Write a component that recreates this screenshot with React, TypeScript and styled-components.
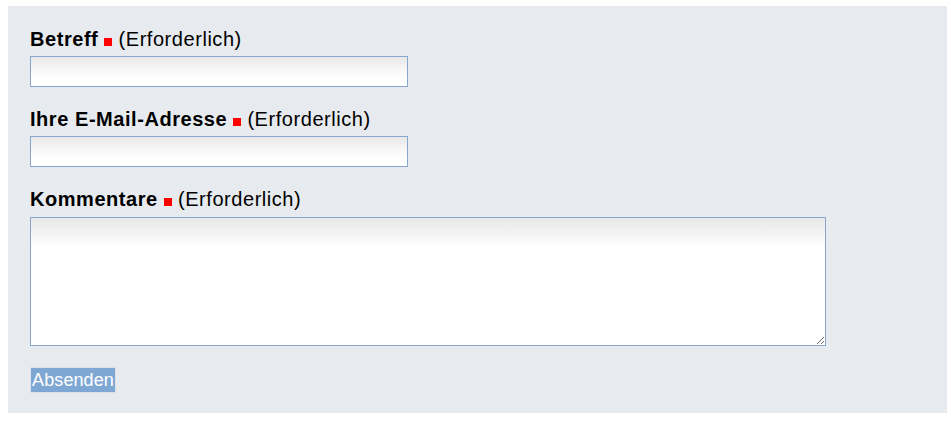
import React from 'react';
import styled, { createGlobalStyle } from 'styled-components';

const GlobalStyle = createGlobalStyle`
  body {
    margin: 0;
    background: #fff;
    font-family: 'Liberation Sans', Arial, sans-serif;
  }
`;

const fields = [
  { id: 'subject', label: 'Betreff' },
  { id: 'email', label: 'Ihre E-Mail-Adresse' },
];

function App(): JSX.Element {
  return (
    <>
      <GlobalStyle />
      <StyledPanel onSubmit={(e) => e.preventDefault()}>
        {fields.map((f) => (
          <StyledField key={f.id}>
            <StyledLabel htmlFor={f.id}>
              <b>{f.label}</b> <StyledMark /> (Erforderlich)
            </StyledLabel>
            <StyledInput id={f.id} type="text" />
          </StyledField>
        ))}
        <StyledField>
          <StyledLabel htmlFor="comments" gap={7}>
            <b>Kommentare</b> <StyledMark /> (Erforderlich)
          </StyledLabel>
          <StyledTextArea id="comments" />
        </StyledField>
        <StyledButton type="submit">Absenden</StyledButton>
      </StyledPanel>
    </>
  );
}

export default App;

const StyledPanel = styled.form`
  display: flex;
  flex-direction: column;
  align-items: flex-start;
  width: 939px;
  box-sizing: border-box;
  margin: 6px 0 0 8px;
  padding: 22px 22px 20px;
  background-color: #e7ebef;
`;

const StyledField = styled.div`
  display: flex;
  flex-direction: column;
  align-items: flex-start;
  margin-bottom: 21px;
`;

const StyledLabel = styled.label<{ gap?: number }>`
  display: block;
  height: 22px;
  font-size: 20px;
  line-height: 22px;
  letter-spacing: 0.55px;
  color: #000;
  margin-bottom: ${(p) => p.gap ?? 6}px;
  white-space: nowrap;

  b {
    font-weight: 700;
  }
`;

const StyledMark = styled.span`
  display: inline-block;
  width: 8px;
  height: 8px;
  background-color: #f00;
  vertical-align: baseline;
`;

const StyledInput = styled.input`
  width: 378px;
  height: 31px;
  box-sizing: border-box;
  margin: 0;
  padding: 2px 4px;
  border: 1px solid #86a5cf;
  border-radius: 0;
  background: linear-gradient(to bottom, #e8e8e8 0, #ffffff 70%);
  font-family: 'Liberation Sans', Arial, sans-serif;
  font-size: 16px;
  outline: none;
`;

const StyledTextArea = styled.textarea`
  display: block;
  width: 796px;
  height: 129px;
  box-sizing: border-box;
  margin: 0;
  padding: 4px;
  border: 1px solid #86a5cf;
  border-radius: 0;
  background: linear-gradient(to bottom, #e8e8e8 0, #ffffff 30px);
  font-family: 'Liberation Sans', Arial, sans-serif;
  font-size: 16px;
  outline: none;
`;

const StyledButton = styled.button`
  box-sizing: border-box;
  width: 86px;
  height: 26px;
  margin: 0;
  padding: 0;
  border: 1px solid #dcdfe3;
  border-radius: 0;
  background-color: #7fa7d4;
  color: #fff;
  font-family: 'Liberation Sans', Arial, sans-serif;
  font-size: 18px;
  line-height: 22px;
  letter-spacing: 0.1px;
  cursor: pointer;
`;
